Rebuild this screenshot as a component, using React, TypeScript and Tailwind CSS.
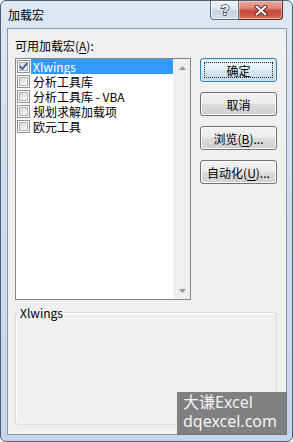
import React from "react";

function Check({ checked }: { checked?: boolean }) {
  return (
    <span className="relative flex h-[13px] w-[13px] shrink-0 border border-[#8e8f8f] bg-white p-[1px]">
      <span className="flex-1 border border-[#aeb3b9] bg-[linear-gradient(135deg,#d6d6d6_0%,#f0f0f0_70%,#fafafa_100%)]" />
      {checked && (
        <svg className="absolute left-[0px] top-[0px]" width="11" height="11" viewBox="0 0 11 11">
          <path d="M2.2 5.6 L4.4 8 L8.8 2.6" fill="none" stroke="#3b5486" strokeWidth="1.7" strokeLinecap="round" strokeLinejoin="round" />
        </svg>
      )}
    </span>
  );
}

function Row({ label, checked, selected }: { label: string; checked?: boolean; selected?: boolean }) {
  return (
    <div className="flex h-[15px] items-center pl-[1px]">
      <Check checked={checked} />
      <div
        className={
          selected
            ? "ml-[1px] flex h-[15px] flex-1 items-center bg-[#3399ff] px-[2px] text-white"
            : "ml-[1px] flex h-[15px] flex-1 items-center px-[2px] text-black"
        }
      >
        <span className="whitespace-nowrap text-[12px] leading-[15px]">{label}</span>
      </div>
    </div>
  );
}

function Btn({ children, def }: { children: React.ReactNode; def?: boolean }) {
  return (
    <div
      className={
        def
          ? "relative flex h-[24px] items-center justify-center rounded-[3px] border border-[#3c7fb1] bg-[linear-gradient(#eef7fc_0%,#e6f2fa_50%,#d6e7f3_50%,#c9dcea_100%)] text-[12px] leading-[15px] text-black shadow-[inset_0_0_0_1px_#c9ecfb]"
          : "relative flex h-[24px] items-center justify-center rounded-[3px] border border-[#707070] bg-[linear-gradient(#f2f2f2_0%,#ebebeb_50%,#dddddd_50%,#cfcfcf_100%)] text-[12px] leading-[15px] text-black shadow-[inset_0_0_0_1px_#fbfbfb]"
      }
    >
      {def && <span className="absolute inset-[3px] border border-dotted border-[#222]" />}
      <span className="relative">{children}</span>
    </div>
  );
}

function ArrowUp() {
  return (
    <svg width="7" height="4" viewBox="0 0 7 4">
      <polygon points="3.5,0 7,4 0,4" fill="#9a9a9a" />
    </svg>
  );
}
function ArrowDown() {
  return (
    <svg width="7" height="4" viewBox="0 0 7 4">
      <polygon points="0,0 7,0 3.5,4" fill="#9a9a9a" />
    </svg>
  );
}

export default function App() {
  return (
    <div className="flex h-[442px] w-[293px] flex-col overflow-hidden rounded-[6px] border border-[#4f5f70] bg-[linear-gradient(180deg,#dde8f3_0%,#cfdeee_40%,#c3d6eb_100%)] font-['Noto_Sans_CJK_SC','Noto_Sans',sans-serif] text-black">
      {/* title bar */}
      <div className="flex h-[27px] shrink-0 items-start">
        <div className="pl-[7px] pt-[6px] text-[12px] leading-[15px] text-black">加载宏</div>
        <div className="ml-auto mr-[9px] flex h-[19px]">
          <div className="flex w-[29px] items-center justify-center rounded-bl-[4px] border border-t-0 border-[#5d6f85] bg-[linear-gradient(180deg,#f0f4f8_0%,#dfe7ef_45%,#c6d3e0_55%,#d3dde8_100%)] shadow-[inset_0_0_0_1px_rgba(255,255,255,0.6)]">
            <svg width="14" height="16" viewBox="0 0 14 16">
              <text
                x="7"
                y="13"
                textAnchor="middle"
                fontSize="14"
                fontWeight="700"
                fontFamily="Liberation Sans, sans-serif"
                fill="#ffffff"
                stroke="#3e4d60"
                strokeWidth="1.6"
                paintOrder="stroke"
              >
                ?
              </text>
            </svg>
          </div>
          <div className="flex w-[44px] items-center justify-center rounded-br-[4px] border border-l-0 border-t-0 border-[#5a2a26] bg-[linear-gradient(180deg,#e9ada2_0%,#dc8677_40%,#c8473a_55%,#cf5a48_85%,#dc8a72_100%)] shadow-[inset_0_0_0_1px_rgba(255,230,220,0.45)]">
            <svg width="14" height="11" viewBox="0 0 14 11">
              <path d="M2.5 1.5 L11.5 9.5 M11.5 1.5 L2.5 9.5" stroke="#5b2420" strokeWidth="4" strokeLinecap="round" />
              <path d="M2.5 1.5 L11.5 9.5 M11.5 1.5 L2.5 9.5" stroke="#ffffff" strokeWidth="2" strokeLinecap="round" />
            </svg>
          </div>
        </div>
      </div>

      {/* client area */}
      <div className="relative ml-[6px] flex h-[407px] w-[280px] shrink-0 flex-col border border-[#8598b0] bg-[#f0f0f0] pl-[7px] pr-[9px] pt-[9px]">
        <div className="flex gap-[9px]">
          <div className="flex w-[176px] flex-col">
            <div className="h-[15px] text-[12px] leading-[15px]">
              可用加载宏(<span className="underline underline-offset-[2px]">A</span>):
            </div>
            <div className="mt-[5px] flex h-[242px] border border-[#828790] bg-white">
              <div className="flex flex-1 flex-col">
                <Row label="Xlwings" checked selected />
                <Row label="分析工具库" />
                <Row label="分析工具库 - VBA" />
                <Row label="规划求解加载项" />
                <Row label="欧元工具" />
              </div>
              <div className="flex w-[17px] flex-col justify-between border-l border-[#f4f4f4] bg-[#efefef]">
                <div className="flex h-[17px] items-center justify-center">
                  <ArrowUp />
                </div>
                <div className="flex h-[17px] items-center justify-center">
                  <ArrowDown />
                </div>
              </div>
            </div>
          </div>
          <div className="mt-[20px] flex w-[77px] flex-col gap-[10px]">
            <Btn def>确定</Btn>
            <Btn>取消</Btn>
            <Btn>浏览(<span className="underline underline-offset-[2px]">B</span>)...</Btn>
            <Btn>自动化(<span className="underline underline-offset-[2px]">U</span>)...</Btn>
          </div>
        </div>
        <fieldset className="mt-[5px] h-[120px] rounded-[3px] border border-[#d5dfe5] shadow-[inset_1px_1px_0_#ffffff]">
          <legend className="ml-[3px] px-[1px] text-[12px] leading-[15px]">Xlwings</legend>
        </fieldset>

        {/* watermark */}
        <div className="absolute bottom-[-1px] right-[-1px] flex h-[43px] w-[110px] flex-col bg-[rgba(112,112,112,0.88)] pl-[6px] pt-[1px] font-['Noto_Sans','Noto_Sans_CJK_SC',sans-serif] text-[16px] leading-[19px] text-[#f4f4f4]">
          <span className="whitespace-nowrap">大谦Excel</span>
          <span className="whitespace-nowrap">dqexcel.com</span>
        </div>
      </div>
    </div>
  );
}
